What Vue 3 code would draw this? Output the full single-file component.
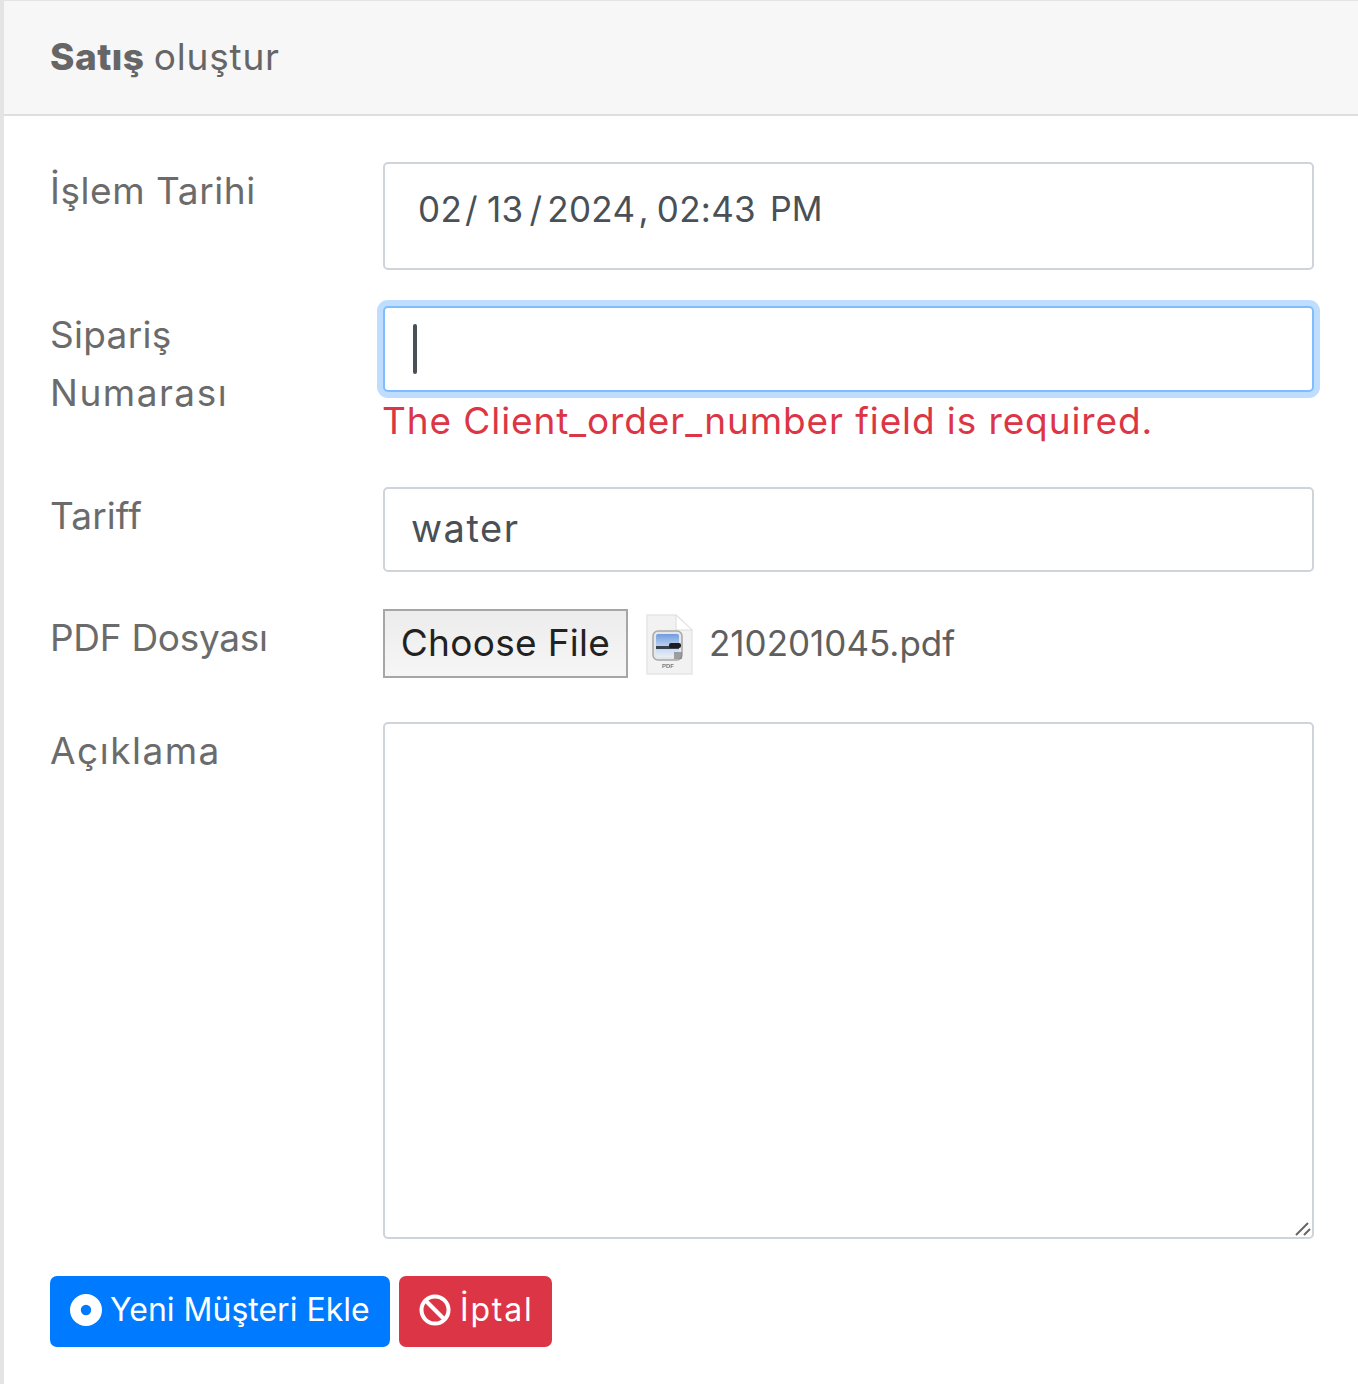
<script setup>
const fileName = '210201045.pdf';
</script>

<template>
  <div class="card">
    <div class="card-header"><b>Satış</b> oluştur</div>
    <form class="card-body" @submit.prevent>
      <div class="row row-date">
        <label class="tight">İşlem Tarihi</label>
        <div class="field date-field">
          <span>02</span><span class="sep sep-a">/</span><span>13</span><span class="sep sep-b">/</span><span>2024</span><span class="comma">,</span><span>02:43</span><span class="pm">PM</span>
        </div>
      </div>

      <div class="row row-order">
        <label><span class="snug">Sipariş</span><br /><span class="wide">Numarası</span></label>
        <div>
          <div class="field focus-field"><i class="caret"></i></div>
          <div class="error">The Client_order_number field is required.</div>
        </div>
      </div>

      <div class="row row-tariff">
        <label class="flat">Tariff</label>
        <input class="field text-field" type="text" value="water" />
      </div>

      <div class="row row-file">
        <label class="narrow">PDF Dosyası</label>
        <div class="file-line">
          <button type="button" class="choose">Choose File</button>
          <svg class="pdf-icon" width="52" height="66" viewBox="0 0 52 66">
            <defs>
              <linearGradient id="sky" x1="0" y1="0" x2="0" y2="1">
                <stop offset="0" stop-color="#6f9ce0" />
                <stop offset="0.55" stop-color="#c0d4f0" />
                <stop offset="1" stop-color="#e8eef6" />
              </linearGradient>
            </defs>
            <path d="M4 4H33L49 19V63H4Z" fill="#f2f2f2" stroke="#e6e6e6" stroke-width="1.5" />
            <path d="M33 4V19H49Z" fill="#fff" stroke="#dcdcdc" />
            <rect x="10" y="20" width="29" height="29" rx="5" fill="#e6e6e6" stroke="#a8a8a8" stroke-width="1.5" />
            <rect x="13" y="23" width="23" height="23" rx="2" fill="url(#sky)" />
            <rect x="13" y="35" width="23" height="3" fill="#39424f" />
            <rect x="26" y="32" width="12" height="5" rx="2" fill="#1d1d1f" />
            <rect x="31" y="41" width="8" height="7" fill="#7d7d7d" opacity="0.7" />
            <text x="25" y="57" font-size="6" font-weight="700" fill="#7a7a7a" text-anchor="middle" font-family="Liberation Sans, sans-serif">PDF</text>
          </svg>
          <span class="file-name">{{ fileName }}</span>
        </div>
      </div>

      <div class="row row-note">
        <label class="wide">Açıklama</label>
        <div class="note-wrap">
          <textarea class="field note"></textarea>
          <svg class="grip" width="16" height="16" viewBox="0 0 16 16">
            <path d="M1 14L13 2M9 14L15 8" stroke="#666" stroke-width="2" fill="none" />
          </svg>
        </div>
      </div>

      <div class="actions">
        <button type="button" class="btn btn-primary">
          <svg width="32" height="32" viewBox="0 0 32 32">
            <circle cx="16" cy="16" r="10.6" fill="none" stroke="#fff" stroke-width="10.8" />
          </svg>
          <span>Yeni Müşteri Ekle</span>
        </button>
        <button type="button" class="btn btn-danger">
          <svg width="32" height="32" viewBox="0 0 32 32">
            <circle cx="16" cy="16" r="13.5" fill="none" stroke="#fff" stroke-width="4" />
            <path d="M6.5 6.5L25.5 25.5" stroke="#fff" stroke-width="4" />
          </svg>
          <span>İptal</span>
        </button>
      </div>
    </form>
  </div>
</template>

<style scoped>
.card {
  box-sizing: border-box;
  width: 1358px;
  height: 1384px;
  border-left: 4px solid #e4e4e4;
  border-top: 1px solid #e4e4e4;
  background: #fff;
  font-family: Inter, "Noto Sans", sans-serif;
  color: #6c6c6c;
  overflow: hidden;
}

.card-header {
  height: 115px;
  box-sizing: border-box;
  padding: 35px 0 0 46px;
  background: #f7f7f7;
  border-bottom: 2px solid #dfdfdf;
  font-size: 37px;
  letter-spacing: 0.8px;
  word-spacing: -2px;
  line-height: 42px;
  color: #666;
}

.card-header b {
  font-weight: 800;
  letter-spacing: 0.5px;
}

.card-body {
  padding: 46px 44px 0 46px;
}

.row {
  display: grid;
  grid-template-columns: 333px 931px;
}

label {
  font-size: 37px;
  letter-spacing: 0.9px;
  line-height: 58px;
  color: #6b6b6b;
}

.tight {
  letter-spacing: 0.55px;
}

.snug {
  letter-spacing: 0.3px;
}

.wide {
  letter-spacing: 1.5px;
}

.flat {
  letter-spacing: 0.1px;
}

.narrow {
  letter-spacing: -0.3px;
}

.field {
  box-sizing: border-box;
  display: block;
  width: 931px;
  border: 2px solid #ced4da;
  border-radius: 5px;
  background: #fff;
  color: #495057;
  font-family: inherit;
  font-size: 35px;
  outline: none;
}

.row-date {
  height: 144px;
}

.date-field {
  height: 108px;
  display: flex;
  align-items: center;
  padding: 0 0 14px 33px;
  line-height: 46px;
  letter-spacing: 0.3px;
}

.sep-a {
  margin: 0 9px 0 3px;
}

.sep-b {
  margin: 0 5px 0 6px;
}

.comma {
  margin: 0 8px 0 3px;
}

.pm {
  margin-left: 14px;
  letter-spacing: 0;
  font-size: 34px;
}

.row-order {
  height: 181px;
}

.row-order label {
  margin-top: 0;
}

.focus-field {
  height: 86px;
  border-color: #80bdff;
  box-shadow: 0 0 0 6px rgba(0, 123, 255, 0.25);
  display: flex;
  align-items: center;
  padding-left: 28px;
}

.caret {
  display: block;
  width: 4px;
  height: 50px;
  border-radius: 2px;
  background: #495057;
}

.error {
  margin-top: 6px;
  font-size: 37px;
  letter-spacing: 0.9px;
  line-height: 46px;
  color: #dc3545;
  margin-left: -1px;
}

.row-tariff {
  height: 122px;
}

.text-field {
  height: 85px;
  padding: 0 26px 4px;
  font-size: 38px;
  letter-spacing: 1.5px;
}

.row-file {
  height: 113px;
}

.file-line {
  display: flex;
  align-items: center;
  height: 69px;
}

.choose {
  box-sizing: border-box;
  width: 245px;
  height: 69px;
  border: 2px solid #a6a6a6;
  background: linear-gradient(#ececec, #f6f6f6);
  color: #222;
  font-family: inherit;
  font-size: 37px;
  letter-spacing: 0.3px;
  padding: 0 0 2px;
}

.pdf-icon {
  margin: 0 14px 0 15px;
  flex: none;
  filter: blur(0.7px);
}

.file-name {
  font-size: 35px;
  color: #5f5f5f;
  margin-top: -1px;
}

.row-note {
  height: 554px;
}

.note-wrap {
  position: relative;
  height: 517px;
}

.note {
  height: 517px;
  padding: 10px 27px;
  resize: none;
}

.grip {
  position: absolute;
  right: 3px;
  bottom: 2px;
}

.actions {
  display: flex;
  gap: 9px;
}

.btn {
  display: flex;
  align-items: center;
  gap: 8px;
  height: 71px;
  border: none;
  border-radius: 7px;
  color: #fff;
  font-family: inherit;
  font-size: 32px;
  padding: 0 20px;
  white-space: nowrap;
}

.btn span {
  margin-top: -4px;
}

.btn svg {
  flex: none;
  margin-top: -4px;
}

.btn-primary {
  width: 340px;
  background: #007bff;
}

.btn-danger {
  width: 153px;
  background: #dc3545;
  letter-spacing: 1.8px;
  gap: 9px;
}
</style>
